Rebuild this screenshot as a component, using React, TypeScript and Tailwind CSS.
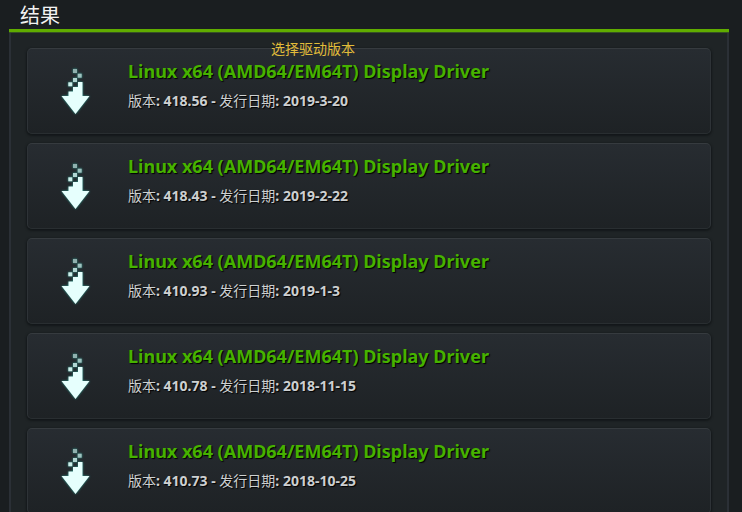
const drivers = [
  { version: "418.56", date: "2019-3-20" },
  { version: "418.43", date: "2019-2-22" },
  { version: "410.93", date: "2019-1-3" },
  { version: "410.78", date: "2018-11-15" },
  { version: "410.73", date: "2018-10-25" },
];

function DownloadIcon() {
  return (
    <svg
      viewBox="0 0 36 54"
      aria-hidden="true"
      className="h-[54px] w-9 shrink-0 drop-shadow-[0_0_1px_#2f9c90]"
    >
      <rect x="16" y="4" width="4" height="4" fill="#8fb0ae" />
      <rect x="20.7" y="8.7" width="4" height="4" fill="#9fc2bf" />
      <rect x="16" y="13" width="4" height="4" fill="#b2d5d2" />
      <rect x="11.3" y="17.3" width="4" height="4" fill="#cdeeea" />
      <path d="M21 17H25.5V31H32.5L18.5 49L4.5 31H11.5V26.5H16V22H21Z" fill="#e6fffd" />
    </svg>
  );
}

function DriverCard({ version, date }: { version: string; date: string }) {
  return (
    <li className="flex h-[86px] items-start gap-[35px] rounded-[5px] border border-[#2e3337] border-t-[#363b3f] border-b-[#292e31] bg-linear-to-b from-[#272c31] to-[#1e2225] pt-4 pl-[29px] shadow-[0_1px_2px_1px_#14181a]">
      <DownloadIcon />
      <div className="-mt-[6px] flex min-w-0 flex-col gap-2">
        <h2 className="text-[18px] leading-6 font-bold whitespace-nowrap text-[#46b200] [text-shadow:1px_1px_1px_#000]">
          <a href="#driver">Linux x64 (AMD64/EM64T) Display Driver</a>
        </h2>
        <p className="text-[14px] leading-5 font-bold whitespace-nowrap text-[#cdd0d1] [text-shadow:1px_1px_1px_#000]">
          <span className="font-normal">版本</span>: {version} - <span className="font-normal">发行日期</span>: {date}
        </p>
      </div>
    </li>
  );
}

export default function App() {
  return (
    <main className="relative flex h-screen flex-col overflow-hidden bg-[#1a1e20] pr-[13px] pl-[9px] font-['Noto_Sans','Noto_Sans_CJK_SC',sans-serif]">
      <h1 className="h-[29px] shrink-0 pl-[11px] text-[20px] leading-8 text-[#f2f2f2]">结果</h1>
      <section className="grow border-x-2 border-[#2b3036] bg-[#1f2426]">
        <div className="-mx-[2px] h-1 border-b border-[#365225] bg-[#60ac00]" />
        <ul className="flex flex-col gap-[9px] px-4 pt-[15px]">
          {drivers.map((driver) => (
            <DriverCard key={driver.version} {...driver} />
          ))}
        </ul>
      </section>
      <p className="absolute top-[39px] left-[271px] text-[14px] leading-5 text-[#e2bc3a]">选择驱动版本</p>
    </main>
  );
}
